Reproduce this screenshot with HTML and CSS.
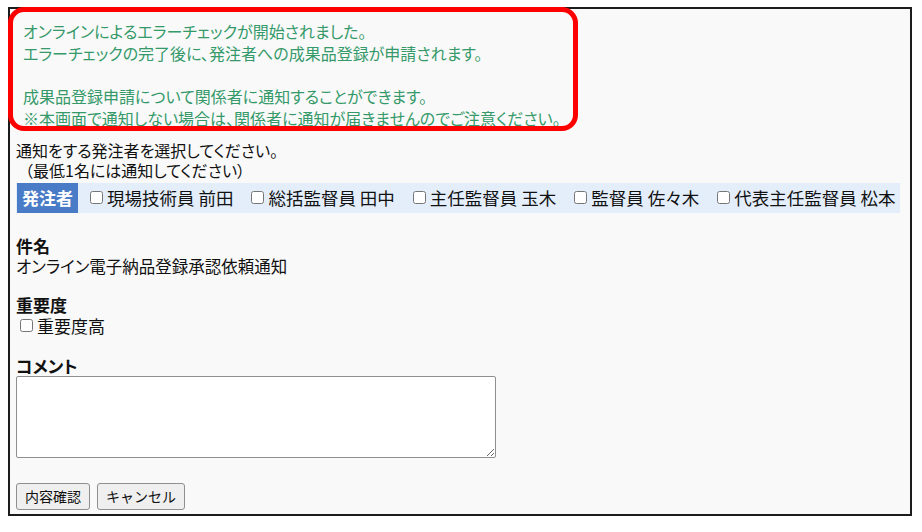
FILE: index.html
```html
<!DOCTYPE html>
<html lang="ja">
<head>
<meta charset="utf-8">
<title>通知</title>
<link rel="stylesheet" href="styles.css">
</head>
<body>
<div class="frame">
  <div class="message">
    <p>オンラインによるエラーチェックが開始されました。</p>
    <p>エラーチェックの完了後に、発注者への成果品登録が申請されます。</p>
    <p>&nbsp;</p>
    <p>成果品登録申請について関係者に通知することができます。</p>
    <p>※本画面で通知しない場合は、関係者に通知が届きませんのでご注意ください。</p>
  </div>
  <div class="highlight"></div>

  <div class="prompt">
    <p>通知をする発注者を選択してください。</p>
    <p class="note">（最低1名には通知してください）</p>
  </div>

  <div class="recipients">
    <span class="tag">発注者</span>
    <label class="person"><input type="checkbox">現場技術員 前田</label>
    <label class="person"><input type="checkbox">総括監督員 田中</label>
    <label class="person"><input type="checkbox">主任監督員 玉木</label>
    <label class="person"><input type="checkbox">監督員 佐々木</label>
    <label class="person"><input type="checkbox">代表主任監督員 松本</label>
  </div>

  <div class="field subject">
    <div class="field-title">件名</div>
    <div class="field-value">オンライン電子納品登録承認依頼通知</div>
  </div>

  <div class="field importance">
    <div class="field-title">重要度</div>
    <label class="field-check"><input type="checkbox">重要度高</label>
  </div>

  <div class="field comment">
    <div class="field-title">コメント</div>
    <textarea class="comment-box"></textarea>
  </div>

  <div class="actions">
    <button class="btn">内容確認</button>
    <button class="btn">キャンセル</button>
  </div>
</div>
</body>
</html>
```

FILE: styles.css
```css
html, body {
  margin: 0;
  padding: 0;
  background: #ffffff;
}

body {
  font-family: "Noto Sans CJK JP", "Noto Sans", sans-serif;
  font-size: 16px;
  color: #111;
  font-feature-settings: "palt";
}

p {
  margin: 0;
}

.frame {
  position: relative;
  box-sizing: border-box;
  margin: 7px 0 0 8px;
  width: 904px;
  height: 509px;
  border: 2px solid #1c1c1c;
  background: #f9f9f9;
  padding: 12px 0 0 6px;
}

.message {
  padding-left: 7px;
  color: #35996a;
  line-height: 21.75px;
}

.highlight {
  position: absolute;
  left: -2px;
  top: -2px;
  width: 570px;
  height: 124px;
  box-sizing: border-box;
  border: 5px solid #ff0000;
  border-radius: 16px;
  pointer-events: none;
}

.prompt {
  margin-top: 10px;
  line-height: 20px;
}

.prompt .note {
  padding-left: 9px;
}

.recipients {
  margin-top: 3px;
  display: flex;
  align-items: stretch;
  width: fit-content;
  height: 30px;
  background: #e4eefb;
  padding-right: 4px;
  font-size: 17.5px;
}

.tag {
  display: flex;
  align-items: center;
  margin-left: 1px;
  margin-right: 8px;
  padding: 0 5px;
  background: #4a7bc6;
  color: #fff;
  font-weight: bold;
  font-size: 17px;
}

.person {
  display: flex;
  align-items: center;
  margin-right: 14px;
  white-space: pre;
}

.person:last-child {
  margin-right: 0;
}

input[type="checkbox"] {
  width: 13px;
  height: 13px;
  margin: 0 4px 0 4px;
}

.field {
  line-height: 21px;
  font-size: 17px;
}

.subject {
  margin-top: 22px;
}

.importance {
  margin-top: 17px;
}

.comment {
  margin-top: 18px;
}

.field-title {
  font-weight: bold;
}

.field-value {
  font-size: 16.5px;
}

.field-check {
  display: flex;
  align-items: center;
  height: 22px;
}

.comment-box {
  display: block;
  box-sizing: border-box;
  width: 480px;
  height: 82px;
  margin: 0;
  border: 1px solid #8f8f8f;
  border-radius: 2px;
  background: #fff;
}

.actions {
  margin-top: 25px;
  display: flex;
  gap: 7px;
}

.btn {
  height: 27px;
  padding: 0 8px;
  font-family: "Noto Sans CJK JP", sans-serif;
  font-size: 14px;
  font-feature-settings: normal;
  color: #111;
  background: #efefef;
  border: 1px solid #8f8f8f;
  border-radius: 3px;
}
```
